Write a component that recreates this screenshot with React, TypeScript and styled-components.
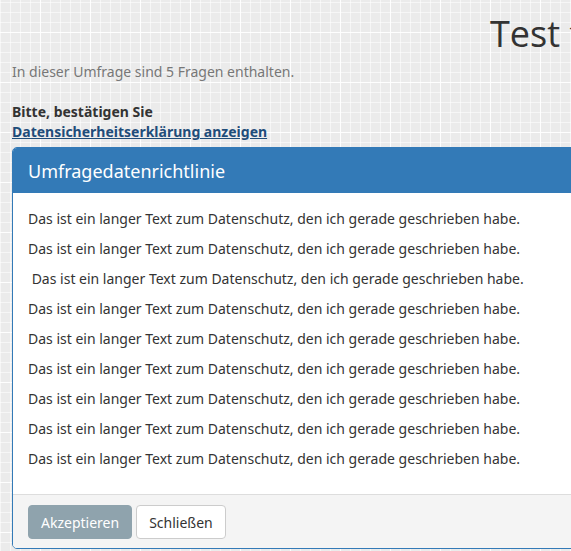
import React from "react";
import styled, { createGlobalStyle } from "styled-components";

const Global = createGlobalStyle`
  html, body {
    margin: 0;
    padding: 0;
    overflow: hidden;
  }
  body {
    font-family: "Noto Sans", "Open Sans", sans-serif;
    color: #333;
    background-color: #ebebeb;
    background-image:
      linear-gradient(to right, rgba(255,255,255,0.9) 1px, transparent 1px),
      linear-gradient(to bottom, rgba(255,255,255,0.9) 1px, transparent 1px),
      linear-gradient(to right, rgba(255,255,255,0.55) 1px, transparent 1px),
      linear-gradient(to bottom, rgba(255,255,255,0.55) 1px, transparent 1px);
    background-size: 50px 50px, 50px 50px, 10px 10px, 10px 10px;
    background-position: -10px -18px, -10px -18px, 0 2px, 0 2px;
  }
`;

const Page = styled.div`
  width: 571px;
  height: 551px;
  overflow: hidden;
  padding: 0 0 0 12px;
  box-sizing: border-box;
`;

const Title = styled.h1`
  margin: 0;
  padding: 12px 0 0 478px;
  font-family: "Open Sans", "Noto Sans", sans-serif;
  font-weight: 400;
  font-size: 36px;
  line-height: 44px;
  color: #333;
  white-space: nowrap;
`;

const Intro = styled.p`
  margin: 6px 0 0;
  font-size: 14px;
  line-height: 20px;
  color: #777;
`;

const Confirm = styled.div`
  margin-top: 20px;
  font-size: 14px;
  line-height: 20px;
  font-weight: 700;
  color: #333;
`;

const Link = styled.a`
  display: block;
  font-weight: 700;
  font-size: 14px;
  line-height: 20px;
  color: #1f4d7a;
  text-decoration: underline;
`;

const Modal = styled.div`
  margin-top: 5px;
  width: 640px;
  border: 1px solid #337ab7;
  border-radius: 5px;
  overflow: hidden;
  background: #fff;
`;

const ModalHeader = styled.div`
  background: #337ab7;
  color: #fff;
  height: 45px;
  padding: 0 15px;
  display: flex;
  align-items: center;
  font-size: 18px;
`;

const ModalBody = styled.div`
  padding: 11px 15px 20px;
  display: flex;
  flex-direction: column;
  border-bottom: 1px solid #ddd;
`;

const Line = styled.p`
  margin: 0;
  font-size: 14px;
  line-height: 30px;
  white-space: pre;
  color: #333;
`;

const ModalFooter = styled.div`
  background: #f4f4f4;
  padding: 10px 15px 9px;
  display: flex;
  gap: 4px;
`;

const Button = styled.button<{ $primary?: boolean }>`
  font-family: "Noto Sans", "Open Sans", sans-serif;
  font-size: 14px;
  height: 34px;
  padding: 0 12px;
  border-radius: 4px;
  border: 1px solid ${(p) => (p.$primary ? "#8fa3ad" : "#ccc")};
  background: ${(p) => (p.$primary ? "#8fa3ad" : "#fff")};
  color: ${(p) => (p.$primary ? "#fff" : "#333")};
`;

const text =
  "Das ist ein langer Text zum Datenschutz, den ich gerade geschrieben habe.";

export default function App() {
  const lines = [text, text, " " + text, text, text, text, text, text, text];
  return (
    <>
      <Global />
      <Page>
        <Title>Test fragebogen</Title>
        <Intro>In dieser Umfrage sind 5 Fragen enthalten.</Intro>
        <Confirm>Bitte, bestätigen Sie</Confirm>
        <Link href="#">Datensicherheitserklärung anzeigen</Link>
        <Modal>
          <ModalHeader>Umfragedatenrichtlinie</ModalHeader>
          <ModalBody>
            {lines.map((l, i) => (
              <Line key={i}>{l}</Line>
            ))}
          </ModalBody>
          <ModalFooter>
            <Button $primary>Akzeptieren</Button>
            <Button>Schließen</Button>
          </ModalFooter>
        </Modal>
      </Page>
    </>
  );
}
